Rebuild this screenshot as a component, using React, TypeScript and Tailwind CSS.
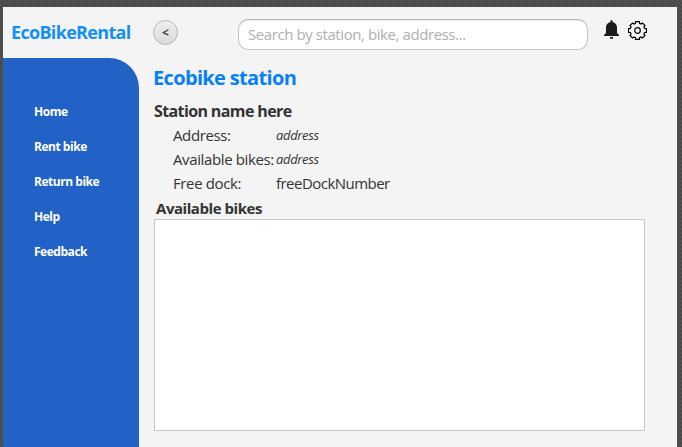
const menu = ['Home', 'Rent bike', 'Return bike', 'Help', 'Feedback'];

const details = [
  { label: 'Address:', value: 'address', italic: true },
  { label: 'Available bikes:', value: 'address', italic: true },
  { label: 'Free dock:', value: 'freeDockNumber', italic: false },
];

function Bell() {
  return (
    <svg className="h-5 w-[15px]" viewBox="0 0 15 20" fill="#1c1c1c">
      <path d="M6.500 2V.3h2V2c2.900.7 4.500 2.800 4.500 5.500V13L15 15v1H0v-1l2-2V7.500C2 4.800 3.600 2.700 6.500 2ZM6 17h3v1.800H6Z" />
    </svg>
  );
}

function Gear() {
  return (
    <svg className="h-[19px] w-[19px]" viewBox="0 0 19 19" fill="none" stroke="#000" strokeWidth="1.200">
      <path d="M7.500 .6h4v1.800l1.500.7 1.500-1.100 2.500 2.500-1.100 1.500.7 1.500h1.800v4h-1.800l-.7 1.500 1.100 1.500-2.500 2.500-1.500-1.100-1.500.7v1.800h-4v-1.800l-1.500-.7-1.500 1.100-2.500-2.500 1.100-1.500-.7-1.500H.6v-4h1.800l.7-1.500L2 4.500 4.500 2 6 3.100l1.500-.7Z" />
      <circle cx="9.500" cy="9.500" r="2.800" />
    </svg>
  );
}

export default function App() {
  return (
    <div className="h-[447px] w-[682px] overflow-hidden bg-[repeating-conic-gradient(#484848_0_25%,#525252_0_50%)] bg-[length:4px_4px] pt-[7px] pr-[5px] pl-[3px] font-['Open_Sans','Noto_Sans',sans-serif] text-[#333]">
      <div className="flex h-[440px] flex-col bg-[#f4f4f4]">
        <header className="flex h-[51px] shrink-0 items-start whitespace-nowrap">
          <div className="ml-2 w-[142px] pt-3 text-[18px] leading-[26px] font-bold tracking-[-0.680px] text-[#1590f2]">EcoBikeRental</div>
          <button className="mt-[13px] flex h-[25px] w-[25px] items-center justify-center rounded-full border border-[#b8b8b8] bg-linear-to-b from-[#efefef] to-[#dadada] pt-px text-[12px] leading-none font-bold">&lt;</button>
          <div className="mt-3 ml-[60px] h-[31px] w-[350px] rounded-[10px] border border-[#c4c4c4] border-t-[#b8b8b8] bg-white pl-[9px] text-[15px] leading-[29px] tracking-[-0.420px] text-[#b0b0b0] shadow-[inset_0_1px_1px_#e8e8e8]">Search by station, bike, address...</div>
          <div className="mt-[13px] ml-4"><Bell /></div>
          <div className="mt-[14px] ml-[9px]"><Gear /></div>
        </header>
        <div className="flex min-h-0 flex-1">
          <nav className="flex w-[136px] shrink-0 flex-col rounded-tr-[30px] bg-[#2262c6] pt-[36px] pl-[31px] text-[12px] font-bold text-white">
            {menu.map((item) => (
              <a key={item} className="h-[35px] leading-[35px] tracking-[-0.470px]">{item}</a>
            ))}
          </nav>
          <main className="flex flex-1 flex-col pl-[15px] whitespace-nowrap">
            <h1 className="mt-[6px] -ml-px h-[28px] text-[20px] leading-[28px] font-bold tracking-[-0.660px] text-[#0880f5]">Ecobike station</h1>
            <h2 className="mt-2 h-[23px] text-[16px] leading-[22px] font-bold tracking-[-0.620px]">Station name here</h2>
            <dl className="pl-[19px]">
              {details.map((d, i) => (
                <div key={i} className="flex h-6 items-center text-[15px] leading-6">
                  <dt className="w-[103px] tracking-[-0.380px]">{d.label}</dt>
                  <dd className={d.italic ? 'text-[13px] tracking-[-0.350px] italic' : 'tracking-[-0.530px]'}>{d.value}</dd>
                </div>
              ))}
            </dl>
            <h3 className="ml-[2px] h-6 text-[15px] leading-[26px] font-bold tracking-[-0.450px]">Available bikes</h3>
            <div className="h-[212px] w-[491px] border border-[#c8c8c8] bg-white" />
          </main>
        </div>
      </div>
    </div>
  );
}
